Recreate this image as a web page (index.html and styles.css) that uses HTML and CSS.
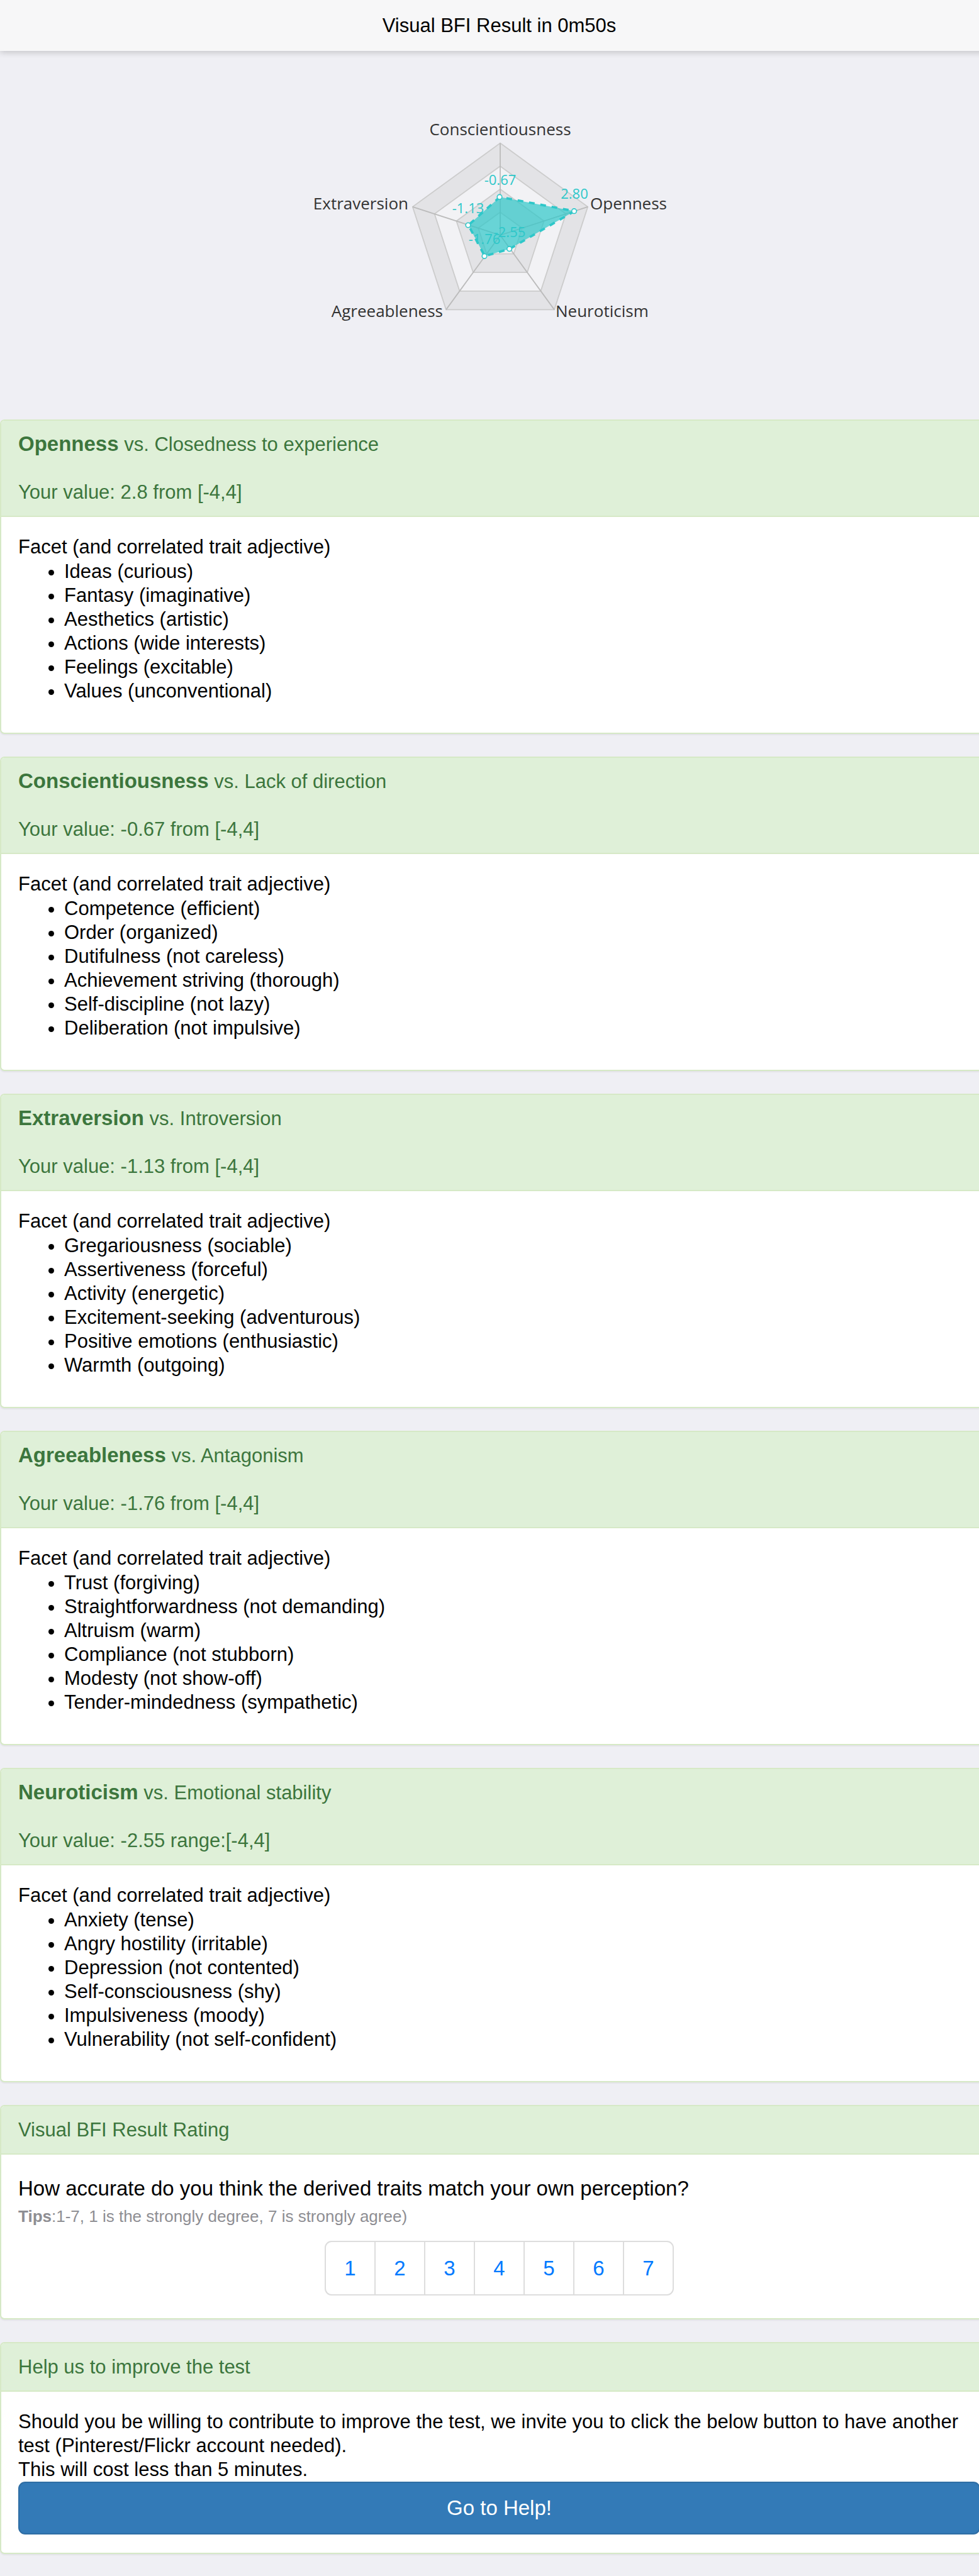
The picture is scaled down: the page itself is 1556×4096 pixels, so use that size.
FILE: index.html
```html
<!DOCTYPE html>
<html lang="en">
<head>
<meta charset="utf-8">
<meta name="viewport" content="width=device-width, initial-scale=1">
<title>Visual BFI Result</title>
<link rel="stylesheet" href="styles.css">
</head>
<body>
<div class="page">
  <header class="navbar">
    <h1 class="navbar-title">Visual BFI Result in 0m50s</h1>
  </header>

  <main class="content">
    <figure class="chart">
      <svg class="radar" width="640" height="586" viewBox="-321 -293 640 586" role="img" aria-label="Radar chart of the five traits">
        <g class="radar-split">
          <polygon class="dark" points="0,-146.4 139.2,-45.2 86,118.4 -86,118.4 -139.2,-45.2"/>
          <polygon class="light" points="0,-109.8 104.4,-33.9 64.5,88.8 -64.5,88.8 -104.4,-33.9"/>
          <polygon class="dark" points="0,-73.2 69.6,-22.6 43,59.2 -43,59.2 -69.6,-22.6"/>
          <polygon class="light" points="0,-36.6 34.8,-11.3 21.5,29.6 -21.5,29.6 -34.8,-11.3"/>
        </g>
        <path class="radar-axis" d="M0 0V-146.4M0 0L139.2 -45.2M0 0L86 118.4M0 0L-86 118.4M0 0L-139.2 -45.2"/>
        <polygon class="radar-area" points="-0.5,-60.8 -50.5,-16 -24.6,33.3 15,21.7 118,-38.3"/>
        <polygon class="radar-line" points="-0.5,-60.8 -50.5,-16 -24.6,33.3 15,21.7 118,-38.3"/>
        <g class="radar-dots">
          <circle cx="-1" cy="-60.8" r="3.8"/>
          <circle cx="-51" cy="-16" r="3.8"/>
          <circle cx="-25" cy="33.3" r="3.8"/>
          <circle cx="14.6" cy="21.7" r="3.8"/>
          <circle cx="117.5" cy="-38.3" r="3.8"/>
        </g>
        <g class="radar-values">
          <text x="0" y="-80">-0.67</text>
          <text x="-51" y="-35">-1.13</text>
          <text x="-25" y="14">-1.76</text>
          <text x="15" y="3">-2.55</text>
          <text x="118" y="-58">2.80</text>
        </g>
        <g class="radar-names">
          <text class="middle" x="0" y="-159">Conscientiousness</text>
          <text class="end" x="-146" y="-41">Extraversion</text>
          <text class="end" x="-91" y="130">Agreeableness</text>
          <text x="88" y="130">Neuroticism</text>
          <text x="143" y="-41">Openness</text>
        </g>
      </svg>
    </figure>

    <section class="panel">
      <div class="panel-heading">
        <h2 class="panel-title"><strong>Openness</strong> vs. Closedness to experience</h2>
        <p class="panel-value">Your value: 2.8 from [-4,4]</p>
      </div>
      <div class="panel-body">
        <p>Facet (and correlated trait adjective)</p>
        <ul class="facets">
          <li>Ideas (curious)</li>
          <li>Fantasy (imaginative)</li>
          <li>Aesthetics (artistic)</li>
          <li>Actions (wide interests)</li>
          <li>Feelings (excitable)</li>
          <li>Values (unconventional)</li>
        </ul>
      </div>
    </section>

    <section class="panel">
      <div class="panel-heading">
        <h2 class="panel-title"><strong>Conscientiousness</strong> vs. Lack of direction</h2>
        <p class="panel-value">Your value: -0.67 from [-4,4]</p>
      </div>
      <div class="panel-body">
        <p>Facet (and correlated trait adjective)</p>
        <ul class="facets">
          <li>Competence (efficient)</li>
          <li>Order (organized)</li>
          <li>Dutifulness (not careless)</li>
          <li>Achievement striving (thorough)</li>
          <li>Self-discipline (not lazy)</li>
          <li>Deliberation (not impulsive)</li>
        </ul>
      </div>
    </section>

    <section class="panel">
      <div class="panel-heading">
        <h2 class="panel-title"><strong>Extraversion</strong> vs. Introversion</h2>
        <p class="panel-value">Your value: -1.13 from [-4,4]</p>
      </div>
      <div class="panel-body">
        <p>Facet (and correlated trait adjective)</p>
        <ul class="facets">
          <li>Gregariousness (sociable)</li>
          <li>Assertiveness (forceful)</li>
          <li>Activity (energetic)</li>
          <li>Excitement-seeking (adventurous)</li>
          <li>Positive emotions (enthusiastic)</li>
          <li>Warmth (outgoing)</li>
        </ul>
      </div>
    </section>

    <section class="panel">
      <div class="panel-heading">
        <h2 class="panel-title"><strong>Agreeableness</strong> vs. Antagonism</h2>
        <p class="panel-value">Your value: -1.76 from [-4,4]</p>
      </div>
      <div class="panel-body">
        <p>Facet (and correlated trait adjective)</p>
        <ul class="facets">
          <li>Trust (forgiving)</li>
          <li>Straightforwardness (not demanding)</li>
          <li>Altruism (warm)</li>
          <li>Compliance (not stubborn)</li>
          <li>Modesty (not show-off)</li>
          <li>Tender-mindedness (sympathetic)</li>
        </ul>
      </div>
    </section>

    <section class="panel">
      <div class="panel-heading">
        <h2 class="panel-title"><strong>Neuroticism</strong> vs. Emotional stability</h2>
        <p class="panel-value">Your value: -2.55 range:[-4,4]</p>
      </div>
      <div class="panel-body">
        <p>Facet (and correlated trait adjective)</p>
        <ul class="facets">
          <li>Anxiety (tense)</li>
          <li>Angry hostility (irritable)</li>
          <li>Depression (not contented)</li>
          <li>Self-consciousness (shy)</li>
          <li>Impulsiveness (moody)</li>
          <li>Vulnerability (not self-confident)</li>
        </ul>
      </div>
    </section>

    <section class="panel">
      <div class="panel-heading">
        <h2 class="panel-title">Visual BFI Result Rating</h2>
      </div>
      <div class="panel-body">
        <h3 class="question">How accurate do you think the derived traits match your own perception?</h3>
        <p class="tips"><strong>Tips</strong>:1-7, 1 is the strongly degree, 7 is strongly agree)</p>
        <nav aria-label="Rating">
          <ul class="rating">
            <li><a href="#1">1</a></li>
            <li><a href="#2">2</a></li>
            <li><a href="#3">3</a></li>
            <li><a href="#4">4</a></li>
            <li><a href="#5">5</a></li>
            <li><a href="#6">6</a></li>
            <li><a href="#7">7</a></li>
          </ul>
        </nav>
      </div>
    </section>

    <section class="panel">
      <div class="panel-heading">
        <h2 class="panel-title">Help us to improve the test</h2>
      </div>
      <div class="panel-body">
        <p>Should you be willing to contribute to improve the test, we invite you to click the below button to have another test (Pinterest/Flickr account needed).<br>This will cost less than 5 minutes.</p>
        <button class="help-button" type="button">Go to Help!</button>
      </div>
    </section>
  </main>
</div>
</body>
</html>
```

FILE: styles.css
```css
* {
  box-sizing: border-box;
}

body {
  margin: 0;
  background: #efeff4;
  color: #000;
  font-family: "Liberation Sans", Arial, sans-serif;
  font-size: 31px;
  line-height: 38px;
  overflow-x: hidden;
}

h1, h2, h3, p, ul, figure {
  margin: 0;
  padding: 0;
  font-size: inherit;
  font-weight: normal;
}

/* The grid row's gutter runs past the right edge of the window. */
.page {
  width: calc(100% + 31px);
}

.navbar {
  display: flex;
  align-items: center;
  justify-content: center;
  height: 81px;
  background: #f7f7f8;
  box-shadow: 0 2px 10px rgba(0, 0, 0, 0.2);
}

.content {
  padding-bottom: 34px;
}

.chart {
  display: flex;
  justify-content: center;
}

.radar {
  display: block;
  font-family: "Open Sans", "Noto Sans", sans-serif;
}

.radar-split polygon {
  stroke: #ccc;
  stroke-width: 1.8;
}

.dark {
  fill: #e3e3e6;
}

.light {
  fill: #f2f2f5;
}

.radar-axis {
  stroke: #bbb;
  stroke-width: 1.8;
}

.radar-area {
  fill: #2ec7c9;
  fill-opacity: 0.7;
}

.radar-line {
  fill: none;
  stroke: #2ec7c9;
  stroke-width: 3.7;
  stroke-dasharray: 9.15;
}

.radar-dots circle {
  fill: #fff;
  stroke: #2ec7c9;
  stroke-width: 1.6;
}

.radar-values {
  fill: #2ec7c9;
  font-size: 22px;
  text-anchor: middle;
}

.radar-names {
  fill: #333;
  font-size: 26px;
}

.middle {
  text-anchor: middle;
}

.end {
  text-anchor: end;
}

.panel {
  border: 2px solid #d6e9c6;
  border-radius: 7px;
  background: #fff;
  box-shadow: 0 2px 2px rgba(0, 0, 0, 0.05);
}

.panel + .panel {
  margin-top: 36px;
}

.panel-heading {
  padding: 19px 27px 18px;
  border-bottom: 2px solid #d6e9c6;
  border-radius: 5px 5px 0 0;
  background: #dff0d8;
  color: #3c763d;
}

.panel-title strong {
  font-size: 33px;
  line-height: 1;
}

.panel-value {
  margin-top: 38px;
}

.panel-body {
  padding: 29px 27px;
}

.facets {
  margin: 1px 0 18px;
  padding-left: 73px;
}

.question {
  margin-top: 4px;
  font-size: 33px;
  line-height: 42px;
}

.tips {
  margin-top: 4px;
  color: #8e8e93;
  font-size: 26px;
}

.rating {
  display: flex;
  justify-content: center;
  margin: 20px 0 7px;
  list-style: none;
}

.rating li + li {
  margin-left: -2px;
}

.rating a {
  display: flex;
  align-items: center;
  justify-content: center;
  width: 81px;
  height: 87px;
  border: 2px solid #ddd;
  color: #007aff;
  font-size: 33px;
  text-decoration: none;
}

.rating li:first-child a {
  border-radius: 11px 0 0 11px;
}

.rating li:last-child a {
  border-radius: 0 11px 11px 0;
}

.help-button {
  display: block;
  width: 100%;
  height: 84px;
  padding: 0;
  border: 2px solid #2e6da4;
  border-radius: 11px;
  background: #337ab7;
  color: #fff;
  font-family: inherit;
  font-size: 33px;
}
```
